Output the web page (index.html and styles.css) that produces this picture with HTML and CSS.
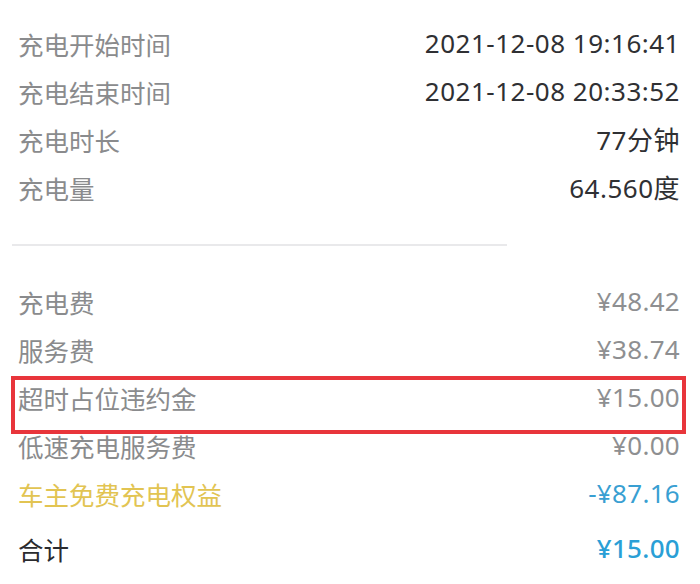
FILE: index.html
```html
<!DOCTYPE html>
<html lang="zh-CN">
  <head>
    <meta charset="UTF-8" />
    <meta name="viewport" content="width=device-width, initial-scale=1.0" />
    <title>充电订单详情</title>
    <link rel="stylesheet" href="styles.css">
  </head>
  <body>
    <div class="detail">
      <div class="group">
        <div class="row">
          <span class="label">充电开始时间</span>
          <span class="value">2021-12-08 19:16:41</span>
        </div>
        <div class="row">
          <span class="label">充电结束时间</span>
          <span class="value">2021-12-08 20:33:52</span>
        </div>
        <div class="row">
          <span class="label">充电时长</span>
          <span class="value">77分钟</span>
        </div>
        <div class="row">
          <span class="label">充电量</span>
          <span class="value">64.560度</span>
        </div>
      </div>
      <div class="divider"></div>
      <div class="group fees">
        <div class="row">
          <span class="label">充电费</span>
          <span class="value">¥48.42</span>
        </div>
        <div class="row">
          <span class="label">服务费</span>
          <span class="value">¥38.74</span>
        </div>
        <div class="row marked">
          <span class="label">超时占位违约金</span>
          <span class="value">¥15.00</span>
          <span class="mark-box"></span>
        </div>
        <div class="row">
          <span class="label">低速充电服务费</span>
          <span class="value">¥0.00</span>
        </div>
        <div class="row">
          <span class="label gold">车主免费充电权益</span>
          <span class="value blue">-¥87.16</span>
        </div>
        <div class="row total">
          <span class="label">合计</span>
          <span class="value">¥15.00</span>
        </div>
      </div>
    </div>
  </body>
</html>
```

FILE: styles.css
```css
html {
  font-family: "Noto Sans", "Noto Sans CJK SC", sans-serif;
}
body {
  margin: 0;
  padding: 0;
  background: #fff;
}
.detail {
  padding: 19px 20px 0 18px;
}
.row {
  display: flex;
  justify-content: space-between;
  align-items: center;
  height: 48px;
  font-size: 25.5px;
}
.label {
  color: #8a8b8d;
}
.value {
  color: #2f3033;
  font-size: 26px;
  letter-spacing: 0.5px;
}
.divider {
  height: 2px;
  background: #e9e9eb;
  margin: 33px 0 31px -6px;
  width: 495px;
}
.fees .value {
  color: #8e8f91;
  letter-spacing: 0.3px;
}
.gold {
  color: #e2c452;
}
.fees .blue {
  color: #399fd2;
}
.marked {
  position: relative;
}
.mark-box {
  position: absolute;
  left: -7px;
  right: -6px;
  top: 3px;
  height: 58px;
  box-sizing: border-box;
  border: 4px solid #e8353b;
}
.total {
  margin-top: 7px;
}
.total .label {
  color: #2a2b2e;
}
.fees .total .value {
  color: #2a9fd6;
  font-weight: 500;
}
```
